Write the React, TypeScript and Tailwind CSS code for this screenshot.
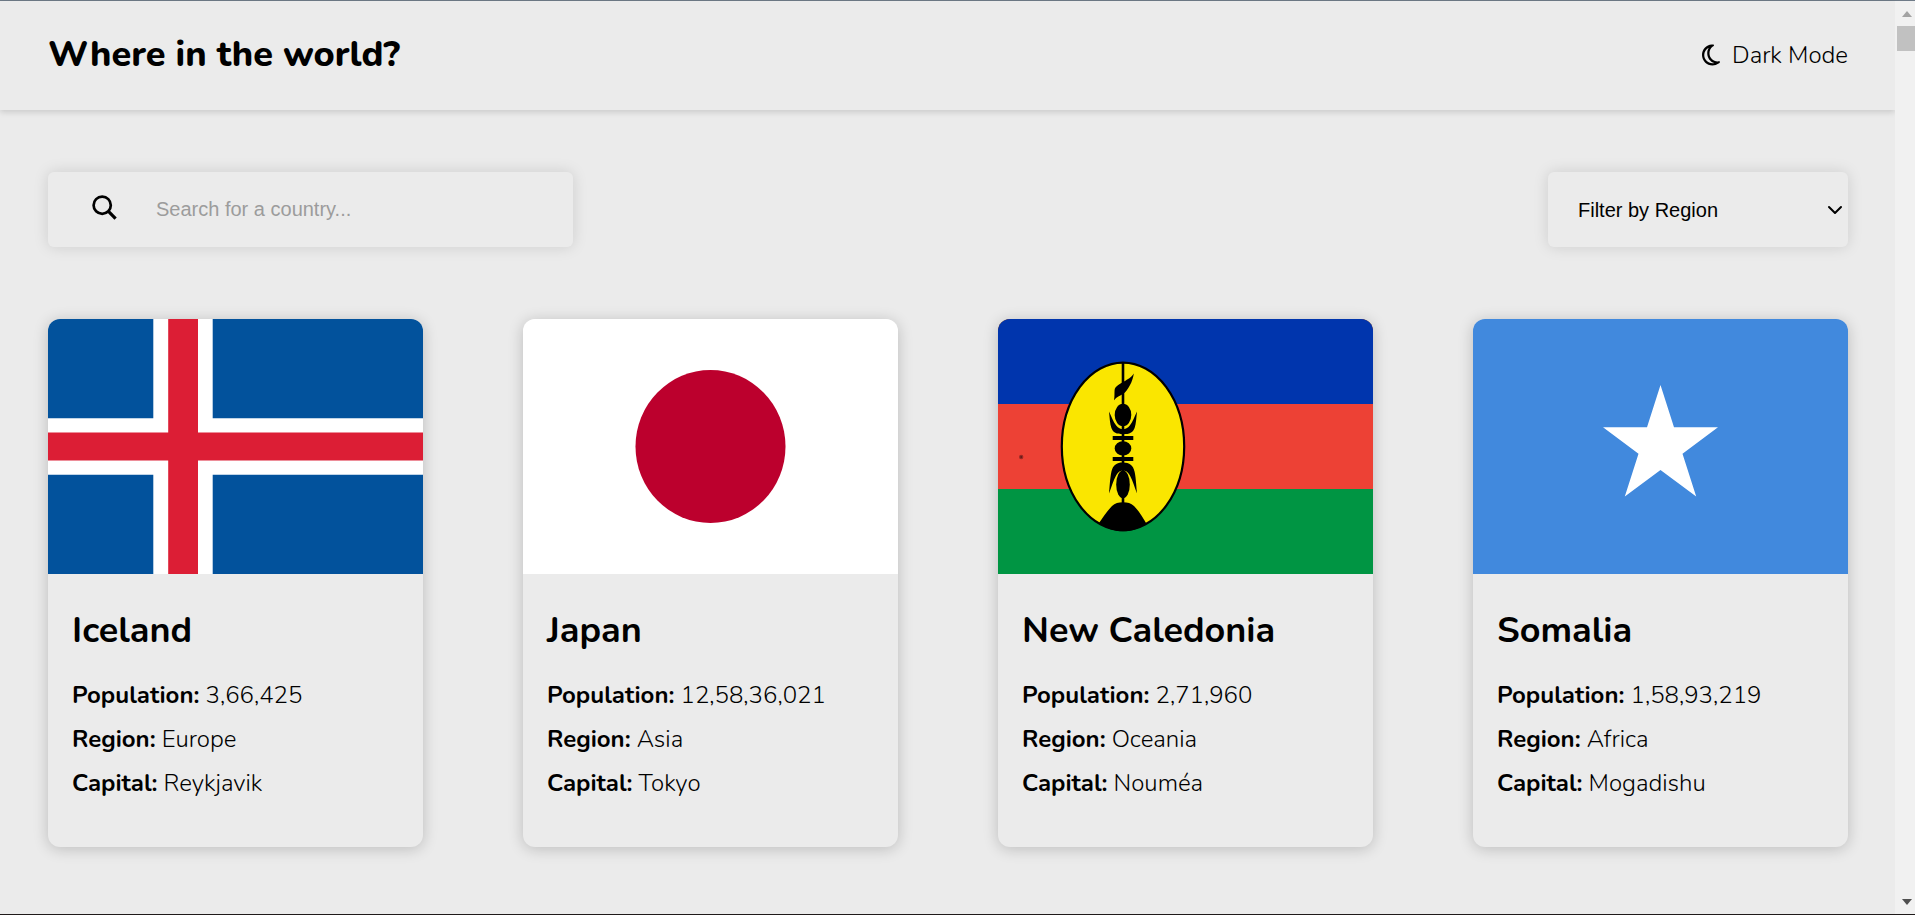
import type { ReactNode } from "react";
import { ChevronDown } from "lucide-react";
import { FaRegMoon } from "react-icons/fa6";

type Country = {
  name: string;
  population: string;
  region: string;
  capital: string;
  flag: ReactNode;
};

function Flag({ label, children }: { label: string; children: ReactNode }) {
  return (
    <svg
      viewBox="0 0 375 255"
      preserveAspectRatio="none"
      role="img"
      aria-label={label}
      className="block h-[255px] w-full"
    >
      {children}
    </svg>
  );
}

const icelandFlag = (
  <Flag label="Flag of Iceland">
    <rect width="375" height="255" fill="#02529c" />
    <path d="M105.3 0h59.4v255h-59.4zM0 99.2h375v56.6H0z" fill="#fff" />
    <path d="M120.2 0h29.8v255h-29.8zM0 113.4h375v28.2H0z" fill="#dc1e35" />
  </Flag>
);

const japanFlag = (
  <Flag label="Flag of Japan">
    <rect width="375" height="255" fill="#fff" />
    <ellipse cx="187.5" cy="127.5" rx="75" ry="76.5" fill="#bc002d" />
  </Flag>
);

const newCaledoniaFlag = (
  <Flag label="Flag of New Caledonia">
    <rect width="375" height="255" fill="#009543" />
    <rect width="375" height="170" fill="#ed4135" />
    <rect width="375" height="85" fill="#0035ad" />
    <circle cx="23.2" cy="138" r="2.2" fill="#9a2a25" />
    <circle cx="23.2" cy="138" r="0.9" fill="#5f1a18" />
    <ellipse cx="125" cy="127.4" rx="61.2" ry="83.8" fill="#fae600" stroke="#000" strokeWidth="2.2" />
    <path d="M123.7 43h2.6v145h-2.6z" />
    <path d="M135.8 54.4c-2.8 4.2-5.8 5.6-9.8 8-4.8 2.700-9 5-9.400 8.600-.3 3.400.1 6.300-.6 10.200 2.700-3.200 5.800-4.400 9.300-6.400 4.400-2.800 9.800-13.200 10.500-20.400z" />
    <ellipse cx="125" cy="96" rx="8.3" ry="11.2" />
    <path d="M111 92.400c.6 5.600.9 12.200 2.400 16.600 1.700 4.600 5 6.200 11.600 6.200s9.900-1.600 11.600-6.200c1.500-4.400 1.800-11 2.400-16.600-2.500 5.200-4.200 10.200-7.200 14.200-2.100 2.700-4.300 3.600-6.800 3.600s-4.700-.9-6.800-3.600c-3-4-4.700-9-7.200-14.200z" />
    <path d="M114.700 117h20.600v4h-20.600zM114.700 138h20.600v4h-20.600z" />
    <ellipse cx="125" cy="129.4" rx="8.3" ry="7.2" />
    <path d="M111 174.400c.6-5.600.9-14.400 2.400-21.600 1.500-6.800 5-9.400 11.600-9.400s10.100 2.600 11.600 9.400c1.500 7.200 1.800 16 2.400 21.600-2.500-6-4.200-13-7.200-18.200-2.100-3.600-4.300-4.800-6.800-4.800s-4.700 1.200-6.800 4.800c-3 5.200-4.700 12.200-7.200 18.200z" />
    <ellipse cx="125" cy="165.4" rx="6.8" ry="14" />
    <path d="M101 204c4-5.500 8.500-12.500 13-17 3-2.800 6.500-3.700 11-3.700s8 .9 11 3.700c4.500 4.500 9 11.500 12.200 17.300-6.800 5.500-14.700 8-23.200 8s-16.700-2.800-24-8.300z" />
  </Flag>
);

const somaliaFlag = (
  <Flag label="Flag of Somalia">
    <rect width="375" height="255" fill="#4189dd" />
    <path
      d="M187.5 66L201 108.2h44L209.5 134.7 223.2 177.4 187.5 151 151.8 177.4 165.5 134.7 130 108.2h44z"
      fill="#fff"
    />
  </Flag>
);

const countries: Country[] = [
  { name: "Iceland", population: "3,66,425", region: "Europe", capital: "Reykjavik", flag: icelandFlag },
  { name: "Japan", population: "12,58,36,021", region: "Asia", capital: "Tokyo", flag: japanFlag },
  { name: "New Caledonia", population: "2,71,960", region: "Oceania", capital: "Nouméa", flag: newCaledoniaFlag },
  { name: "Somalia", population: "1,58,93,219", region: "Africa", capital: "Mogadishu", flag: somaliaFlag },
];

function SearchIcon() {
  return (
    <svg viewBox="0 0 25 25" fill="none" stroke="#000" aria-hidden="true" className="mb-1 size-[25px] shrink-0">
      <circle cx="10.2" cy="10.2" r="8.6" strokeWidth="2.7" />
      <path d="M16.2 16.2L23.6 23.6" strokeWidth="3.2" />
    </svg>
  );
}

function Fact({ label, value }: { label: string; value: string }) {
  return (
    <p>
      <b className="font-bold">{label}:</b> {value}
    </p>
  );
}

function CountryCard({ country }: { country: Country }) {
  return (
    <article className="w-[375px] overflow-hidden rounded-xl bg-[#ebebeb] shadow-[0_2px_15px_rgba(0,0,0,0.2)]">
      {country.flag}
      <div className="px-6 pt-[33px] pb-[42px]">
        <h2 className="mb-[18px] text-4xl leading-[48px] font-bold">{country.name}</h2>
        <div className="text-2xl leading-[44px] font-light">
          <Fact label="Population" value={country.population} />
          <Fact label="Region" value={country.region} />
          <Fact label="Capital" value={country.capital} />
        </div>
      </div>
    </article>
  );
}

function ScrollRail() {
  return (
    <div aria-hidden="true" className="flex w-5 shrink-0 flex-col items-end bg-[#f1f1f1]">
      <svg viewBox="0 0 18 25" className="h-[25px] w-[18px]">
        <path d="M5 16h10l-5-6z" fill="#a3a3a3" />
      </svg>
      <div className="h-[25px] w-[18px] bg-[#c1c1c1]" />
      <svg viewBox="0 0 18 25" className="mt-auto h-[25px] w-[18px]">
        <path d="M5 10h10l-5 6z" fill="#505050" />
      </svg>
    </div>
  );
}

export default function App() {
  return (
    <div className="flex min-h-screen border-t border-b border-t-[#6f7b88] border-b-[#1f1a1a] bg-[#ebebeb] font-[Nunito,'Open_Sans',sans-serif] text-black">
      <div className="min-w-0 grow">
        <header className="flex h-[109px] items-center justify-between pr-[47px] pb-0.5 pl-12 shadow-[0_2px_6px_rgba(0,0,0,0.15)]">
          <h1 className="text-4xl font-extrabold">Where in the world?</h1>
          <button type="button" className="flex items-center gap-3 text-2xl font-light">
            <FaRegMoon className="h-6 w-[18px]" />
            Dark Mode
          </button>
        </header>

        <main className="pt-[62px] pr-[47px] pb-[67px] pl-12">
          <div className="flex flex-wrap items-center justify-between gap-6 font-['Liberation_Sans',Arial,sans-serif] text-xl">
            <label className="flex h-[75px] w-[525px] items-center gap-[39px] rounded-md pl-11 shadow-[0_0_15px_rgba(0,0,0,0.13)]">
              <SearchIcon />
              <input
                type="search"
                aria-label="Search for a country"
                placeholder="Search for a country..."
                className="h-full min-w-0 grow bg-transparent outline-none placeholder:text-[#9c9c9c]"
              />
            </label>
            <div className="relative">
              <select
                aria-label="Filter by Region"
                defaultValue=""
                className="h-[75px] w-[300px] appearance-none rounded-md bg-[#ebebeb] pr-8 pl-[30px] shadow-[0_0_15px_rgba(0,0,0,0.13)] outline-none"
              >
                <option value="">Filter by Region</option>
                <option>Africa</option>
                <option>Americas</option>
                <option>Asia</option>
                <option>Europe</option>
                <option>Oceania</option>
              </select>
              <ChevronDown
                aria-hidden="true"
                className="pointer-events-none absolute inset-y-0 right-px my-auto size-6"
              />
            </div>
          </div>

          <section
            aria-label="Countries"
            className="mt-[72px] grid grid-cols-[repeat(auto-fill,375px)] justify-between gap-x-[90px] gap-y-16"
          >
            {countries.map((country) => (
              <CountryCard key={country.name} country={country} />
            ))}
          </section>
        </main>
      </div>
      <ScrollRail />
    </div>
  );
}
